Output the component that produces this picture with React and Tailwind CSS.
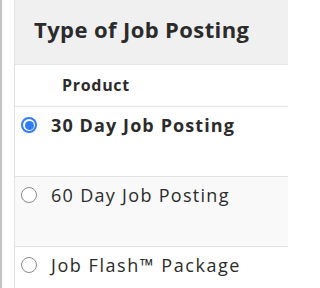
export default function App() {
  const rows = [
    { label: '30 Day Job Posting', checked: true, bg: 'bg-white', track: 'tracking-[1.1px]' },
    { label: '60 Day Job Posting', checked: false, bg: 'bg-[#f9f9f9]', track: 'tracking-[1.3px]' },
    { label: 'Job Flash™ Package', checked: false, bg: 'bg-white', track: 'tracking-[1.55px]' },
  ]

  return (
    <div className="w-[288px] h-[288px] overflow-hidden flex bg-white text-[#2b2b2b] font-['Open_Sans',sans-serif]">
      <div className="w-[2px] shrink-0 bg-[#c4c4c4]" />
      <div className="w-[12px] shrink-0 bg-white" />
      <div className="flex-1 flex flex-col border-l border-[#e2e2e2]">
        <div className="h-[65px] shrink-0 bg-[#f0f0f0] border-b border-[#e2e2e2] flex items-center pl-[19px]">
          <h2 className="text-[22px] font-bold tracking-[0.4px] leading-none pb-[7px]">Type of Job Posting</h2>
        </div>
        <div className="h-[42px] shrink-0 border-b border-[#e2e2e2] flex items-center pl-[47px]">
          <span className="text-[16px] font-bold tracking-[0.7px] leading-none pb-[2px]">Product</span>
        </div>
        {rows.map((r) => (
          <label
            key={r.label}
            className={`h-[70px] shrink-0 border-b border-[#e2e2e2] ${r.bg} flex items-start pt-[7px] pl-[6px] gap-[14px]`}
          >
            {r.checked ? (
              <span className="mt-[3px] w-[16px] h-[16px] shrink-0 rounded-full border-2 border-[#2f7cf6] bg-white flex items-center justify-center">
                <span className="w-[9px] h-[9px] rounded-full bg-[#2f7cf6]" />
              </span>
            ) : (
              <span className="mt-[3px] w-[16px] h-[16px] shrink-0 rounded-full border-[1.5px] border-[#8a8a8a] bg-white" />
            )}
            <span className={`text-[18px] leading-[22px] ${r.checked ? 'font-bold' : 'font-normal'} ${r.track}`}>
              {r.label}
            </span>
          </label>
        ))}
      </div>
    </div>
  )
}
